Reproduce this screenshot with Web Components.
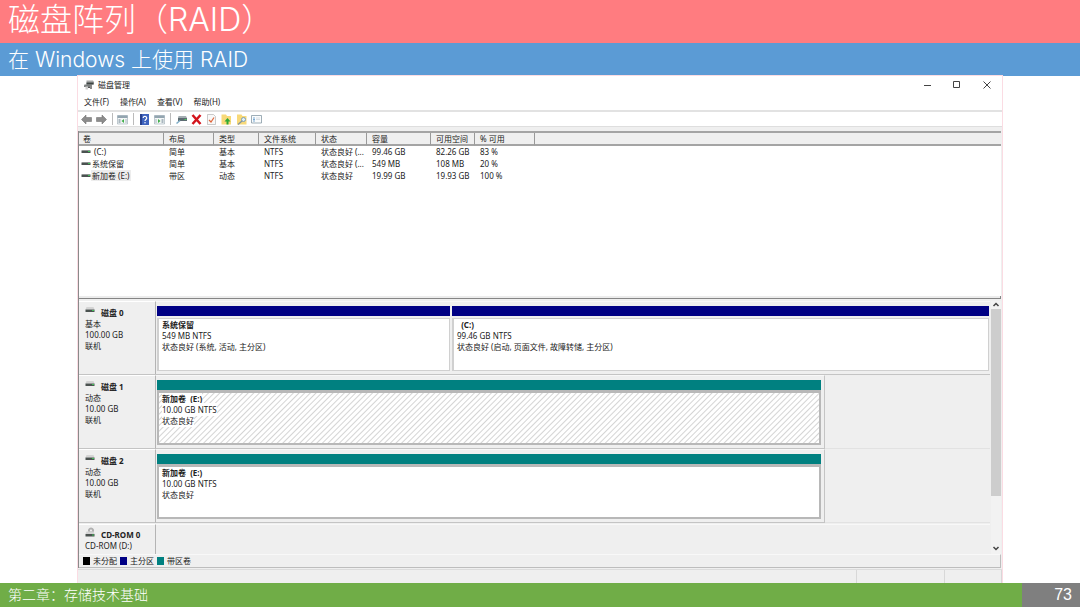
<!DOCTYPE html>
<html lang="zh-CN">
<head>
<meta charset="utf-8">
<title>磁盘阵列（RAID）</title>
<style>
  html, body { margin: 0; }
  body { font-family: "Noto Sans", "Noto Sans CJK SC", sans-serif; background: #fff; color: #222; }
</style>
</head>
<body>
<slide-page>
  <span slot="title">磁盘阵列（RAID）</span>
  <span slot="subtitle">在 Windows 上使用 RAID</span>
  <disk-window></disk-window>
  <span slot="chapter">第二章：存储技术基础</span>
  <span slot="number">73</span>
</slide-page>

<script>
const define = (name, html, setup) => {
  const template = document.createElement('template');
  template.innerHTML = html;
  customElements.define(name, class extends HTMLElement {
    constructor() {
      super();
      this.attachShadow({ mode: 'open' }).append(template.content.cloneNode(true));
    }
    connectedCallback() { if (setup) setup(this, this.shadowRoot); }
  });
};

define('slide-page', `
<style>
  :host { display: flex; flex-direction: column; min-height: 100vh; }
  h1, h2 { margin: 0; color: #fff; font-family: Inter, "Noto Sans CJK SC", sans-serif; font-weight: 300; padding: 0 8px; white-space: nowrap; }
  h1 { background: #ff7c80; font-size: 32px; line-height: 40px; padding-bottom: 3px; }
  h2 { background: #5b9bd5; font-size: 21px; line-height: 33px; }
  main { flex: 1; display: flex; padding: 0 77px; margin-top: -1px; }
  footer { display: flex; background: #70ad47; color: #fff; line-height: 24px; font-size: 14px; font-family: "Liberation Sans", "Noto Sans CJK SC", sans-serif; }
  .chapter { flex: 1; padding-left: 8px; font-weight: 300; }
  .number { width: 50px; padding-right: 8px; box-sizing: content-box; text-align: right; background: #7f7f7f; font-size: 16px; }
</style>
<h1><slot name="title"></slot></h1>
<h2><slot name="subtitle"></slot></h2>
<main><slot></slot></main>
<footer><div class="chapter"><slot name="chapter"></slot></div><div class="number"><slot name="number"></slot></div></footer>
`);

define('disk-window', `
<style>
  :host { flex: 1; display: flex; flex-direction: column; border: 1px solid #fbdce3; border-bottom-width: 0; background: #efefef; font-size: 8px; line-height: 12px; min-width: 0; }
  .body { flex: 1; display: flex; flex-direction: column; border-left: 1px solid #8a8a8a; margin-top: 4px; padding-right: 1px; }
  .split { height: 2px; background: #ececec; border-bottom: 1px solid #858585; border-right: 1px solid #858585; }
</style>
<window-title>磁盘管理</window-title>
<menu-bar></menu-bar>
<tool-bar></tool-bar>
<div class="body">
  <volume-list></volume-list>
  <div class="split"></div>
  <disk-map></disk-map>
  <color-legend></color-legend>
</div>
<status-bar></status-bar>
`);

define('window-title', `
<style>
  :host { display: flex; align-items: center; height: 18px; background: #fff; padding: 0 10px 0 6px; }
  .name { flex: 1; margin-left: 4px; }
  .controls { display: flex; gap: 20px; }
  button { border: 0; padding: 0; background: none; width: 10px; height: 10px; display: block; }
  svg { display: block; }
</style>
<svg width="10" height="10" viewBox="0 0 20 20"><path d="M5 1h13l2 3v5h-4v4H5z" fill="#a5a8a8"/><path d="M5 5h14v4H5z" fill="#3c4442"/><path d="M1 9h12l2 2v3H0v-3z" fill="#7b7f7e"/><path d="M3 13h5v6H3z" fill="#cfcfcf"/><path d="M12 11h4v7h-4z" fill="#8a8a8a"/><path d="M8 14h4v2H8z" fill="#555"/></svg>
<span class="name"><slot></slot></span>
<div class="controls">
  <button aria-label="最小化"><svg width="10" height="10"><path d="M2 5.500h7" stroke="#444"/></svg></button>
  <button aria-label="最大化"><svg width="10" height="10"><path d="M1.500 1.500h6v6h-6z" stroke="#444" fill="none"/></svg></button>
  <button aria-label="关闭"><svg width="10" height="10"><path d="M1.500 1.500l7 7m0-7l-7 7" stroke="#444"/></svg></button>
</div>
`);

define('menu-bar', `
<style>
  :host { display: flex; gap: 11px; height: 16px; padding-left: 6px; background: #fff; border-bottom: 2px solid #e2e2e2; }
  button { border: 0; padding: 0; background: none; font: inherit; color: inherit; line-height: 16px; }
</style>
<button>文件(F)</button><button>操作(A)</button><button>查看(V)</button><button>帮助(H)</button>
`);

define('tool-bar', `
<style>
  :host { display: flex; align-items: center; gap: 4px; height: 14px; padding-left: 3px; background: #fff; border-bottom: 1px solid #dedede; }
  button { border: 0; padding: 0; background: none; width: 11px; height: 11px; }
  svg { display: block; width: 11px; height: 11px; }
  i { width: 1px; height: 12px; background: #bbb; margin: 0 1px; }
  i:first-of-type { margin-right: 0; }
</style>
<button aria-label="后退"><svg viewBox="0 0 22 22"><path d="M1 11L10 2v5h11v8H10v5z" fill="#8c8c8c" stroke="#666"/></svg></button>
<button aria-label="前进"><svg viewBox="0 0 22 22"><path d="M21 11L12 2v5H1v8h11v5z" fill="#8c8c8c" stroke="#666"/></svg></button>
<i></i>
<button aria-label="显示控制台树"><svg viewBox="0 0 22 22"><path d="M1 3h20v17H1z" fill="#f4f6f7" stroke="#8799a4"/><path d="M1 3h20v5H1z" fill="#93a5b0"/><path d="M3 10h4v8H3zM17 10h2v8h-2z" fill="#aab7bf"/><path d="M14 10v8l-5-4z" fill="#3fae49"/></svg></button>
<i></i>
<button aria-label="帮助"><svg viewBox="0 0 22 22"><path d="M2 0h18v22H2z" fill="#3d62bd"/><path d="M2 0h4v22H2z" fill="#27408e"/><path d="M8.500 8c0-5 7-4 7 0 0 3-3.500 3-3.500 6" fill="none" stroke="#fff" stroke-width="2.400"/><circle cx="12" cy="17.500" r="1.500" fill="#fff"/></svg></button>
<button aria-label="显示操作窗格"><svg viewBox="0 0 22 22"><path d="M1 3h20v17H1z" fill="#f4f6f7" stroke="#8799a4"/><path d="M1 3h20v5H1z" fill="#93a5b0"/><path d="M3 10h2v8H3zM15 10h4v8h-4z" fill="#aab7bf"/><path d="M8 10v8l5-4z" fill="#3fae49"/></svg></button>
<i></i>
<button aria-label="磁盘"><svg viewBox="0 0 22 22"><path d="M5 4h15l2 4v6H4V8z" fill="#a4aeb2"/><path d="M4 8h18v6H4z" fill="#5d6c72"/><path d="M17 10h4v2h-4z" fill="#4fd060"/><path d="M1 19l7-6" stroke="#7caac5" stroke-width="3"/></svg></button>
<button aria-label="删除"><svg viewBox="0 0 22 22"><path d="M3 2l16 18M19 2L3 20" stroke="#d3141c" stroke-width="5"/></svg></button>
<button aria-label="属性"><svg viewBox="0 0 22 22"><path d="M3 1h12l4 4v16H3z" fill="#f8f8f8" stroke="#999"/><path d="M6 12l4 4 6-9" fill="none" stroke="#e0653a" stroke-width="2.400"/></svg></button>
<button aria-label="上移"><svg viewBox="0 0 22 22"><path d="M1 1h9l2 3h8v17H1z" fill="#f8d978"/><path d="M11 21h4v-6h4l-6-7-6 7h4z" fill="#2eaa35"/></svg></button>
<button aria-label="查找"><svg viewBox="0 0 22 22"><path d="M2 1h9l2 3h8v17H2z" fill="#f8d978"/><circle cx="15" cy="11" r="4" fill="#dff0fa" stroke="#7d9db3" stroke-width="2"/><path d="M12 14l-8 7" stroke="#8093a0" stroke-width="2.500"/></svg></button>
<button aria-label="列表"><svg viewBox="0 0 22 22"><path d="M1 3h20v15H1z" fill="#fafcfd" stroke="#8799a4" stroke-width="1.600"/><path d="M4 8h4M4 11h4M4 14h4" stroke="#4d8fc4" stroke-width="1.500"/><path d="M10 8h8M10 11h8" stroke="#b7c3ca"/></svg></button>
`);

define('drive-icon', `
<style>:host { display: inline-block; width: 10px; height: 10px; } svg { display: block; }</style>
<svg width="10" height="10" viewBox="0 0 20 20"><path class="disc" d=""/><path class="top" d="M3 4h14l2 5H1z" fill="#d4d4d4"/><path d="M1 9h18v5H1z" fill="#4b5250"/><path d="M14 10h4v2h-4z" fill="#3fc257"/></svg>
`, (host, root) => {
  if (host.hasAttribute('flat')) root.querySelector('.top').setAttribute('d', 'M3 8h14l2 2H1z');
  if (host.hasAttribute('cd')) {
    const disc = root.querySelector('.disc');
    disc.setAttribute('d', 'M12 -4a6 6 0 1 0 .1 0zM12 0a2 2 0 1 1-.1 0z');
    disc.setAttribute('fill', '#b0b0b0');
    root.querySelector('svg').setAttribute('viewBox', '0 -5 20 20');
  }
});

define('volume-list', `
<style>
  :host { flex: 1; display: block; background: #fff; border-top: 2px solid #a4a4a4; }
  table { width: 100%; table-layout: fixed; border-collapse: separate; border-spacing: 0; }
  th, td { padding: 0 0 0 5px; text-align: left; font-weight: 400; white-space: nowrap; overflow: hidden; height: 12px; line-height: 11px; vertical-align: top; }
  th { background: #efefef; border-right: 1px solid #999; border-bottom: 2px solid #a4a4a4; box-sizing: border-box; height: 13px; }
  th:last-child { border-right: 0; }
  th:first-child { padding-left: 4px; }
  td:first-child { padding-left: 2px; }
  drive-icon { vertical-align: top; }
  .name { display: inline-block; padding: 0 2px 0 1px; white-space: pre; }
  .sel { background: #ededed; }
  .v { width: 85px; } .l { width: 50px; } .t { width: 45px; } .f { width: 57px; }
  .s { width: 51px; } .c { width: 64px; } .a { width: 44px; } .p { width: 60px; }
</style>
<table>
  <colgroup><col class="v"><col class="l"><col class="t"><col class="f"><col class="s"><col class="c"><col class="a"><col class="p"><col></colgroup>
  <thead><tr><th>卷</th><th>布局</th><th>类型</th><th>文件系统</th><th>状态</th><th>容量</th><th>可用空间</th><th>% 可用</th><th></th></tr></thead>
  <tbody>
    <tr><td><drive-icon flat></drive-icon><span class="name"> (C:)</span></td><td>简单</td><td>基本</td><td>NTFS</td><td>状态良好 (...</td><td>99.46 GB</td><td>82.26 GB</td><td>83 %</td><td></td></tr>
    <tr><td><drive-icon flat></drive-icon><span class="name">系统保留</span></td><td>简单</td><td>基本</td><td>NTFS</td><td>状态良好 (...</td><td>549 MB</td><td>108 MB</td><td>20 %</td><td></td></tr>
    <tr><td><drive-icon flat></drive-icon><span class="name sel">新加卷 (E:)</span></td><td>带区</td><td>动态</td><td>NTFS</td><td>状态良好</td><td>19.99 GB</td><td>19.93 GB</td><td>100 %</td><td></td></tr>
  </tbody>
</table>
`);

define('disk-map', `
<style>
  :host { display: flex; height: 255px; padding-top: 2px; box-sizing: border-box; }
  .rows { flex: 1; overflow: hidden; min-width: 0; }
  .bar { width: 10px; margin-left: 1px; background: #f2f2f2; display: flex; flex-direction: column; }
  .bar svg { display: block; }
  .track { flex: 1; }
  .thumb { height: 80%; background: #cdcdcd; }
</style>
<div class="rows">
  <disk-row><span slot="name">磁盘 0</span>基本<br>100.00 GB<br>联机
    <disk-volume slot="volumes" kind="primary" style="flex: 293"><b slot="name">系统保留</b>549 MB NTFS<br>状态良好 (系统, 活动, 主分区)</disk-volume>
    <disk-volume slot="volumes" kind="primary" style="flex: 537"><b slot="name">&nbsp; (C:)</b>99.46 GB NTFS<br>状态良好 (启动, 页面文件, 故障转储, 主分区)</disk-volume>
  </disk-row>
  <disk-row narrow><span slot="name">磁盘 1</span>动态<br>10.00 GB<br>联机
    <disk-volume slot="volumes" kind="striped" selected style="flex: 1"><b slot="name">新加卷 &nbsp;(E:)</b>10.00 GB NTFS<br>状态良好</disk-volume>
  </disk-row>
  <disk-row narrow><span slot="name">磁盘 2</span>动态<br>10.00 GB<br>联机
    <disk-volume slot="volumes" kind="striped" style="flex: 1"><b slot="name">新加卷 &nbsp;(E:)</b>10.00 GB NTFS<br>状态良好</disk-volume>
  </disk-row>
  <disk-row cd><span slot="name">CD-ROM 0</span>CD-ROM (D:)</disk-row>
</div>
<div class="bar">
  <svg width="10" height="8"><path d="M2.500 5L5 2.500 7.500 5" fill="none" stroke="#444" stroke-width="1.500"/></svg>
  <div class="track"><div class="thumb"></div></div>
  <svg width="10" height="11"><path d="M2.500 4L5 6.500 7.500 4" fill="none" stroke="#444" stroke-width="1.500"/></svg>
</div>
`);

define('disk-row', `
<style>
  :host { display: flex; height: 74px; box-sizing: border-box; border-bottom: 1px solid #c4c4c4; line-height: 11px; }
  .label { width: 77px; flex: none; box-sizing: border-box; padding: 5px 0 0 6px; border-right: 1px solid #b4b4b4; border-top: 1px solid #fff; }
  .head { display: flex; gap: 6px; font-weight: 700; }
  drive-icon { margin-top: -2px; }
  .volumes { flex: 1; display: flex; gap: 2px; padding: 4px 1px 3px; border-top: 1px solid #f8f8f8; box-sizing: border-box; }
  :host([narrow]) { border-bottom-color: #e2e2e2; }
  :host([narrow]) .label { margin-bottom: -1px; border-bottom: 1px solid #c4c4c4; }
  :host([narrow]) .volumes { flex: 0 0 calc((100% - 77px) * 0.8 + 2px); margin-bottom: -1px; padding-right: 3px; border-right: 1px solid #c4c4c4; border-bottom: 1px solid #c4c4c4; }
  :host([cd]) .label { margin-top: 1px; }
  :host([cd]) .volumes { margin-top: 1px; }
  :host([cd]) .label { padding-top: 4px; }
</style>
<div class="label"><div class="head"><drive-icon></drive-icon><slot name="name"></slot></div><slot></slot></div>
<div class="volumes"><slot name="volumes"></slot></div>
`, (host, root) => {
  if (!host.hasAttribute('cd')) return;
  const icon = document.createElement('drive-icon');
  icon.setAttribute('cd', '');
  root.querySelector('drive-icon').replaceWith(icon);
});

define('disk-volume', `
<style>
  :host { display: flex; flex-direction: column; min-width: 0; }
  .strip { height: 10px; background: #000084; }
  .body { flex: 1; margin-top: 2px; padding: 0 3px; border: solid #d0d0d0; border-width: 1px 1px 1px 2px; background: #fff; line-height: 11px; white-space: nowrap; overflow: hidden; }
  .text { padding: 1px 0; }
  :host([kind=striped]) .strip { background: #008080; }
  :host([kind=striped]) .body { margin-top: 0; border: 2px solid #b8b8b8; border-top-width: 3px; }
  :host([selected]) .body { background: repeating-linear-gradient(135deg, #fff 0 2px, #d4d4d4 3px, #fff 4px); }
  :host([selected]) .text { background: #fff; }
</style>
<div class="strip"></div>
<div class="body"><span class="text"><slot name="name"></slot></span><br><span class="text"><slot></slot></span></div>
`);

define('color-legend', `
<style>
  :host { display: flex; align-items: center; gap: 3px; height: 12px; padding-left: 4px; border-bottom: 1px solid #bdbdbd; border-top: 1px solid #f8f8f8; border-right: 1px solid #bdbdbd; }
  i { width: 7px; height: 8px; }
</style>
<i style="background:#000"></i>未分配<i style="background:#000084"></i>主分区<i style="background:#008080"></i>带区卷
`);

define('status-bar', `
<style>
  :host { display: flex; height: 13px; margin-top: 1px; border-top: 1px solid #dcdcdc; }
  div { border-right: 1px solid #d8d8d8; }
  .wide { flex: 1; } .mid { width: 87px; } .end { width: 56px; }
</style>
<div class="wide"></div><div class="mid"></div><div class="end"></div>
`);
</script>
</body>
</html>
